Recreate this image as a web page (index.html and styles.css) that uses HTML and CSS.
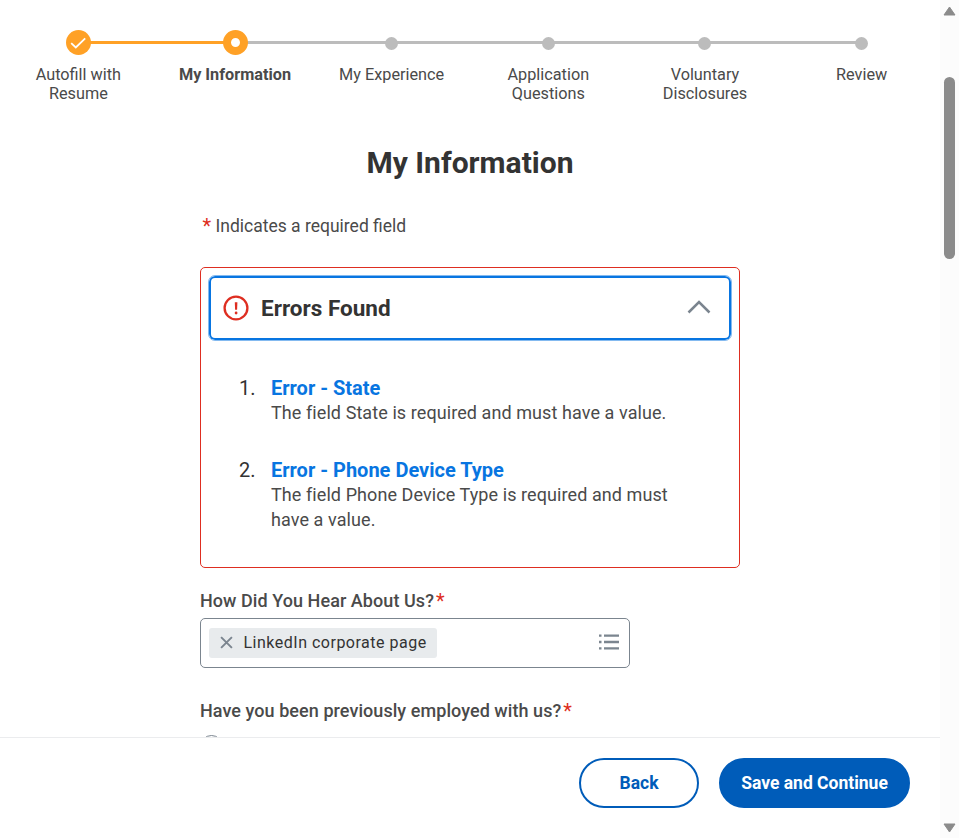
FILE: index.html
```html
<!DOCTYPE html>
<html lang="en">
<head>
<meta charset="utf-8">
<title>My Information</title>
<link rel="stylesheet" href="styles.css">
</head>
<body>
<div class="app">
  <div class="page">
    <main class="content">
      <ol class="stepper">
        <li class="step done"><span class="marker"><svg viewBox="0 0 25 25"><path d="M5.2 13.2l4.6 4.3 9.4-9.1" fill="none" stroke="#fff" stroke-width="1.8"/></svg></span><span class="step-label">Autofill with Resume</span></li>
        <li class="step current"><span class="marker"></span><span class="step-label">My Information</span></li>
        <li class="step"><span class="marker"></span><span class="step-label">My Experience</span></li>
        <li class="step"><span class="marker"></span><span class="step-label">Application Questions</span></li>
        <li class="step"><span class="marker"></span><span class="step-label">Voluntary Disclosures</span></li>
        <li class="step"><span class="marker"></span><span class="step-label">Review</span></li>
      </ol>
      <h2 class="title">My Information</h2>
      <div class="form">
        <p class="hint"><span class="req">*</span> Indicates a required field</p>
        <section class="errors">
          <button class="errors-head" type="button">
            <svg class="alert" viewBox="0 0 26 26"><circle cx="13" cy="13" r="11.4" fill="none" stroke="#de2e21" stroke-width="2.3"/><path d="M11.8 7.2h2.6l-.3 7.6h-2z" fill="#de2e21"/><circle cx="13.1" cy="18" r="1.4" fill="#de2e21"/></svg>
            <span class="errors-title">Errors Found</span>
            <svg class="chevron" viewBox="0 0 24 16"><path d="M1.500 13.500L12 3l10.500 10.500" fill="none" stroke="#7b858f" stroke-width="2.5"/></svg>
          </button>
          <ol class="error-list">
            <li><span class="num">1.</span><div><a class="error-link">Error - State</a><p>The field State is required and must have a value.</p></div></li>
            <li><span class="num">2.</span><div><a class="error-link">Error - Phone Device Type</a><p>The field Phone Device Type is required and must have a value.</p></div></li>
          </ol>
        </section>
        <div class="label">How Did You Hear About Us?<span class="req">*</span></div>
        <div class="select">
          <span class="pill"><svg class="remove" viewBox="0 0 12 12"><path d="M1 1l10 10M11 1L1 11" stroke="#7b858f" stroke-width="1.8"/></svg><span>LinkedIn corporate page</span></span>
          <svg class="list-icon" viewBox="0 0 20 16"><path d="M0 1.600h2.500M0 8h2.500M0 14.400h2.500M5 1.600h15M5 8h15M5 14.400h15" stroke="#7b858f" stroke-width="2.3"/></svg>
        </div>
        <div class="label second">Have you been previously employed with us?<span class="req">*</span></div>
        <span class="radio"></span>
      </div>
    </main>
    <footer class="footer">
      <button class="btn back" type="button">Back</button>
      <button class="btn save" type="button">Save and Continue</button>
    </footer>
  </div>
  <div class="scrollbar">
    <svg class="arrow" viewBox="0 0 13 10"><path d="M6.500 1L12 9H1z" fill="#8b8b8b" stroke="#8b8b8b" stroke-linejoin="round"/></svg>
    <span class="thumb"></span>
    <svg class="arrow down" viewBox="0 0 13 10"><path d="M6.500 9L12 1H1z" fill="#8b8b8b" stroke="#8b8b8b" stroke-linejoin="round"/></svg>
  </div>
</div>
</body>
</html>
```
FILE: styles.css
```css
* { box-sizing: border-box; }
body { margin: 0; background: #fff; font-family: Roboto, "Liberation Sans", sans-serif; color: #4a4a4a; font-size: 17.5px; }
ol, p, h2 { margin: 0; padding: 0; list-style: none; }
button { font-family: inherit; margin: 0; }
svg { display: block; }
.app { display: grid; grid-template-columns: 940px 19px; height: 838px; overflow: hidden; }
.page { display: flex; flex-direction: column; height: 838px; }
.content { height: 737px; overflow: hidden; padding-top: 30px; }

.stepper { display: grid; grid-template-columns: repeat(6, 1fr); height: 74px; }
.step { position: relative; display: flex; flex-direction: column; align-items: center; }
.step:not(:last-child)::after { content: ""; position: absolute; top: 11px; left: 50%; width: 100%; height: 3px; background: #bcbcbc; }
.step.done:not(:last-child)::after { background: #ffa126; }
.marker { position: relative; z-index: 1; width: 13px; height: 13px; margin: 7px 0 5px; border-radius: 50%; background: #bcbcbc; }
.done .marker, .current .marker { width: 25px; height: 25px; margin: 0; background: #ffa126; }
.current .marker { margin-left: 1px; border: 8px solid #ffa126; background: #fff; }
.step-label { width: 106px; margin-top: 10px; text-align: center; font-size: 16.25px; line-height: 19px; }
.current .step-label { width: 130px; font-weight: 700; }

.title { margin-top: 40px; text-align: center; font-size: 30px; line-height: 37px; font-weight: 700; color: #333; }
.form { width: 540px; margin: 0 auto; }
.hint { margin-top: 33px; padding-left: 2.500px; line-height: 24px; }
.req { position: relative; top: 1px; color: #de2e21; font-size: 20px; font-weight: 400; line-height: 1; }

.errors { height: 301px; margin-top: 29px; padding: 7px; border: 1px solid #de2e21; border-radius: 5px; }
.errors-head { display: flex; align-items: center; width: 524px; height: 66px; padding: 0 20px 1px 14px; border: 1px solid #84baf0; border-radius: 7px; box-shadow: inset 0 0 0 2px #0875e1; background: #fff; }
.alert { width: 26px; height: 26px; margin-right: 12px; }
.errors-title { flex: 1; text-align: left; font-size: 22.5px; font-weight: 700; color: #333; }
.chevron { width: 24px; height: 16px; margin-top: -1px; }
.error-list { padding: 35px 31px 0; color: #333; }
.error-list li { display: grid; grid-template-columns: 32px 410px; height: 82px; font-size: 20px; line-height: 25px; }
.error-link { display: block; color: #0875e1; font-weight: 700; }
.error-list p { margin-top: -1px; font-size: 18px; letter-spacing: .08px; line-height: 25px; color: #4a4a4a; }

.label { margin-top: 21px; height: 24px; line-height: 24px; font-size: 18px; font-weight: 500; letter-spacing: .06px; white-space: nowrap; }
.label .req { margin-left: 2px; }
.select { display: flex; align-items: center; justify-content: space-between; width: 430px; height: 50px; margin-top: 5px; padding: 0 10px 0 8px; border: 1px solid #7b858f; border-radius: 5px; }
.pill { display: flex; align-items: center; height: 30px; width: 228px; padding: 0 0 1px 11px; border-radius: 3px; background: #e8ebed; color: #333; font-size: 16px; letter-spacing: .5px; white-space: nowrap; }
.remove { width: 13px; height: 13px; margin-right: 10.500px; }
.list-icon { width: 20px; height: 16px; margin-top: -2px; }
.label.second { margin-top: 31px; }
.radio { display: block; width: 23px; height: 23px; margin-top: 12px; border: 1px solid #7b858f; border-radius: 50%; }

.footer { display: flex; justify-content: flex-end; gap: 20px; height: 101px; padding: 20px 30px; border-top: 1px solid #ebecee; }
.btn { height: 50px; border: 2px solid #005cb9; border-radius: 25px; font-size: 17.5px; font-weight: 700; padding: 0; }
.back { width: 120px; background: #fff; color: #005cb9; }
.save { width: 191px; background: #005cb9; color: #fff; }

.scrollbar { display: flex; flex-direction: column; align-items: center; background: #fcfcfc; height: 838px; padding: 6px 0 5px; }
.arrow { width: 13px; height: 10px; }
.thumb { width: 11px; height: 182px; margin-top: 61px; border-radius: 6px; background: #8b8b8b; }
.down { margin-top: auto; }
```
